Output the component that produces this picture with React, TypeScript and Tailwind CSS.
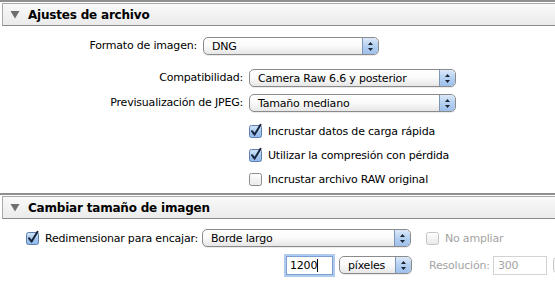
import React from "react";

const font = { fontFamily: '"DejaVu Sans", "Liberation Sans", sans-serif', letterSpacing: "-0.2px" };

function Triangle() {
  return (
    <svg width="10" height="9" viewBox="0 0 10 9" className="shrink-0">
      <path d="M0.5 1 L9.5 1 L5 8.5 Z" fill="#6e6e6e" />
    </svg>
  );
}

function Header({ title }: { title: string }) {
  return (
    <div className="flex flex-col">
      <div className="h-[2px] bg-[#8f8f8f]" />
      <div className="h-[1px] bg-white" />
      <div className="ml-[2px] h-[23px] border-t border-l border-b border-t-[#a9a9a9] border-l-[#a9a9a9] border-b-[#8a8a8a] bg-gradient-to-b from-[#f9f9f9] to-[#ebebeb] flex items-center pl-[7px] gap-[8px]">
        <Triangle />
        <span className="text-[12px] font-bold text-black leading-none">{title}</span>
      </div>
    </div>
  );
}

function Arrows() {
  return (
    <div className="w-[16px] h-full flex items-center justify-center border-l border-[#7d96b8] bg-gradient-to-b from-[#dce9f9] via-[#b5d0f1] to-[#9dc0ec] rounded-r-[4px]">
      <svg width="7" height="11" viewBox="0 0 7 11">
        <path d="M3.5 1 L6 4 L1 4 Z" fill="#1b2433" />
        <path d="M3.5 10 L6 7 L1 7 Z" fill="#1b2433" />
      </svg>
    </div>
  );
}

function Popup({ text, w }: { text: string; w: number }) {
  return (
    <div
      className="shrink-0 h-[18px] flex items-stretch rounded-[5px] border border-[#8b8b8b] bg-gradient-to-b from-white via-[#fafafa] to-[#e6e6e6] shadow-[0_1px_0_rgba(0,0,0,0.08)] overflow-hidden"
      style={{ width: w }}
    >
      <div className="flex-1 flex items-center pl-[8px] text-[11px] text-black leading-none whitespace-nowrap">{text}</div>
      <Arrows />
    </div>
  );
}

function CheckBox({ checked, disabled }: { checked: boolean; disabled?: boolean }) {
  return (
    <svg width="14" height="14" viewBox="0 0 14 14" className="shrink-0 overflow-visible">
      <defs>
        <linearGradient id="cbBlue" x1="0" y1="0" x2="0" y2="1">
          <stop offset="0" stopColor="#d6e6f9" />
          <stop offset="0.5" stopColor="#a9c8ee" />
          <stop offset="1" stopColor="#8fb8ea" />
        </linearGradient>
        <linearGradient id="cbWhite" x1="0" y1="0" x2="0" y2="1">
          <stop offset="0" stopColor="#ffffff" />
          <stop offset="1" stopColor="#e9e9e9" />
        </linearGradient>
      </defs>
      <rect
        x="0.5"
        y="1.5"
        width="12"
        height="12"
        rx="2"
        fill={checked ? "url(#cbBlue)" : "url(#cbWhite)"}
        stroke={checked ? "#5d7fae" : disabled ? "#c4c4c4" : "#8c8c8c"}
      />
      {checked && (
        <path d="M3 7.2 L5.6 10.6 L11.5 0.8" fill="none" stroke="#17233a" strokeWidth="2" strokeLinecap="round" strokeLinejoin="round" />
      )}
    </svg>
  );
}

function CheckRow({ label, checked }: { label: string; checked: boolean }) {
  return (
    <div className="h-[24px] flex items-center pl-[249px] gap-[5px]">
      <CheckBox checked={checked} />
      <span className="text-[11px] text-black leading-none whitespace-nowrap">{label}</span>
    </div>
  );
}

export default function App() {
  return (
    <div className="w-[555px] h-[288px] bg-white overflow-hidden" style={font}>
      <Header title="Ajustes de archivo" />
      <div className="flex flex-col pt-[11px] pb-[2px]">
        <div className="flex items-center">
          <div className="w-[197px] shrink-0 text-right text-[11px] text-black">Formato de imagen:</div>
          <div className="ml-[6px]"><Popup text="DNG" w={176} /></div>
        </div>
        <div className="flex items-center mt-[14px]">
          <div className="w-[243px] shrink-0 text-right text-[11px] text-black">Compatibilidad:</div>
          <div className="ml-[6px]"><Popup text="Camera Raw 6.6 y posterior" w={207} /></div>
        </div>
        <div className="flex items-center mt-[7px]">
          <div className="w-[243px] shrink-0 text-right text-[11px] text-black">Previsualización de JPEG:</div>
          <div className="ml-[6px]"><Popup text="Tamaño mediano" w={207} /></div>
        </div>
        <div className="mt-[7px] flex flex-col">
          <CheckRow label="Incrustar datos de carga rápida" checked />
          <CheckRow label="Utilizar la compresión con pérdida" checked />
          <CheckRow label="Incrustar archivo RAW original" checked={false} />
        </div>
      </div>
      <Header title="Cambiar tamaño de imagen" />
      <div className="flex flex-col pt-[10px]">
        <div className="flex items-center h-[18px]">
          <div className="ml-[26px] w-[176px] shrink-0 flex items-center gap-[5px]">
            <CheckBox checked />
            <span className="text-[11px] text-black leading-none whitespace-nowrap">Redimensionar para encajar:</span>
          </div>
          <Popup text="Borde largo" w={209} />
          <div className="ml-[15px] shrink-0 flex items-center gap-[5px]">
            <CheckBox checked={false} disabled />
            <span className="text-[11px] text-[#a3a3a3] leading-none whitespace-nowrap">No ampliar</span>
          </div>
        </div>
        <div className="flex items-center mt-[9px] h-[18px]">
          <div className="ml-[286px] shrink-0 w-[47px] h-[19px] border border-[#7c9fcf] bg-white shadow-[0_0_0_2px_rgba(110,160,225,0.55)] flex items-center pl-[3px] text-[11px] text-black leading-none">
            1200<span className="inline-block w-[1px] h-[13px] bg-black" />
          </div>
          <div className="ml-[6px]"><Popup text="píxeles" w={73} /></div>
          <span className="ml-[17px] w-[63px] shrink-0 text-[11px] text-[#a3a3a3] leading-none whitespace-nowrap">Resolución:</span>
          <div className="ml-[1px] shrink-0 w-[54px] h-[19px] border border-[#d3d3d3] bg-white flex items-center pl-[4px] text-[11px] text-[#a3a3a3] leading-none">300</div>
          <div className="ml-[6px] w-[20px] h-[18px] rounded-l-[5px] border border-[#c8c8c8] bg-[#f7f7f7] shrink-0" />
        </div>
      </div>
    </div>
  );
}
